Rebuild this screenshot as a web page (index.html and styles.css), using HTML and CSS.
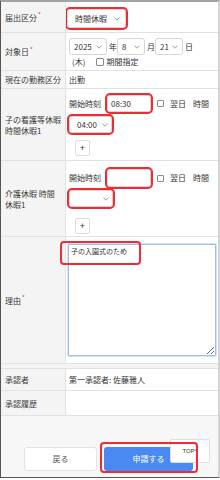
FILE: index.html
```html
<!DOCTYPE html>
<html lang="ja">
<head>
<meta charset="utf-8">
<title>申請</title>
<link rel="stylesheet" href="styles.css">
</head>
<body>
<div class="frame">
  <div class="row r1">
    <div class="label">届出区分<span class="req">*</span></div>
    <div class="value top">
      <div class="select sel-type hl">時間休暇<svg class="chev" viewBox="0 0 6 4"><path d="M0.5 0.5L3 3.2L5.5 0.5"/></svg></div>
    </div>
  </div>
  <div class="row r2">
    <div class="label">対象日<span class="req">*</span></div>
    <div class="value col">
      <div class="line">
        <div class="select w38">2025<svg class="chev" viewBox="0 0 6 4"><path d="M0.5 0.5L3 3.2L5.5 0.5"/></svg></div><span class="unit">年</span>
        <div class="select w28">8<svg class="chev" viewBox="0 0 6 4"><path d="M0.5 0.5L3 3.2L5.5 0.5"/></svg></div><span class="unit">月</span>
        <div class="select w28">21<svg class="chev" viewBox="0 0 6 4"><path d="M0.5 0.5L3 3.2L5.5 0.5"/></svg></div><span class="unit">日</span>
      </div>
      <div class="line l2"><span class="dow">(木)</span><span class="check cb-period"></span><span class="txt">期間指定</span></div>
    </div>
  </div>
  <div class="row r3">
    <div class="label">現在の勤務区分</div>
    <div class="value">出勤</div>
  </div>
  <div class="row r4">
    <div class="label">子の看護等休暇<br>時間休暇1</div>
    <div class="value col tcol t4">
      <div class="tline">
        <span class="tl">開始時刻</span>
        <div class="input hl">08:30</div>
        <span class="check"></span><span class="tl ml6">翌日</span><span class="tl ml7">時間</span>
      </div>
      <div class="select tsel hl s4">04:00<svg class="chev" viewBox="0 0 6 4"><path d="M0.5 0.5L3 3.2L5.5 0.5"/></svg></div>
      <div class="plus p4">+</div>
    </div>
  </div>
  <div class="row r5">
    <div class="label">介護休暇 時間<br>休暇1</div>
    <div class="value col tcol t5">
      <div class="tline">
        <span class="tl">開始時刻</span>
        <div class="input hl i5"></div>
        <span class="check"></span><span class="tl ml6">翌日</span><span class="tl ml7">時間</span>
      </div>
      <div class="select tsel hl s5"><span></span><svg class="chev" viewBox="0 0 6 4"><path d="M0.5 0.5L3 3.2L5.5 0.5"/></svg></div>
      <div class="plus p5">+</div>
    </div>
  </div>
  <div class="row r6">
    <div class="label">理由<span class="req">*</span></div>
    <div class="value top v6">
      <textarea class="reason">子の入園式のため</textarea>
    </div>
    <span class="mark mark-reason"></span>
  </div>
  <div class="sep"></div>
  <div class="row r7">
    <div class="label">承認者</div>
    <div class="value">第一承認者: 佐藤雅人</div>
  </div>
  <div class="row r8">
    <div class="label">承認履歴</div>
    <div class="value"></div>
  </div>
  <div class="footer">
    <button class="btn back">戻る</button>
    <button class="btn submit">申請する</button>
    <div class="totop">TOP^</div>
    <span class="mark mark-submit"></span>
  </div>
</div>
</body>
</html>
```

FILE: styles.css
```css
* { box-sizing: border-box; margin: 0; padding: 0; }
html, body { width: 220px; height: 480px; background: #fff; overflow: hidden; }
body {
  font-family: "Noto Sans CJK JP", "Noto Sans", sans-serif;
  font-size: 8px;
  line-height: 10px;
  color: #333;
}
.frame {
  width: 220px;
  height: 478px;
  border-top: 2px solid #a3a3a3;
  border-left: 1px solid #555;
  border-right: 2px solid #d4d4d4;
  border-bottom: 1px solid #555;
  display: flex;
  flex-direction: column;
  overflow: hidden;
  background: #f7f7f7;
}
.row {
  display: grid;
  grid-template-columns: 65px minmax(0, 1fr);
  border-bottom: 1px solid #e2e2e2;
  background: #fff;
  flex: none;
  position: relative;
}
.r1 { height: 31px; }
.r2 { height: 38px; }
.r3 { height: 18px; }
.r4 { height: 72px; }
.r5 { height: 76px; }
.r6 { height: 127px; }
.r7 { height: 22px; }
.r8 { height: 25px; }
.sep { height: 5px; background: #f4f4f4; border-bottom: 1px solid #e2e2e2; flex: none; }

.label {
  background: #f4f4f4;
  border-right: 1px solid #e2e2e2;
  padding-left: 4px;
  display: flex;
  align-items: center;
  line-height: 11px;
  color: #3a3a3a;
}
.req { color: #e53935; font-size: 6px; line-height: 6px; align-self: center; margin-top: -4px; margin-left: 1px; }
.value {
  padding-left: 3px;
  display: flex;
  align-items: center;
  overflow: hidden;
  white-space: nowrap;
}
.value.top { align-items: flex-start; padding-top: 7px; }
.value.col { flex-direction: column; align-items: flex-start; justify-content: flex-start; }

.hl { outline: 2px solid #ef2b34; outline-offset: 0; }
.mark { position: absolute; border: 2px solid #ef2b34; border-radius: 4px; pointer-events: none; }

.select {
  display: flex;
  align-items: center;
  justify-content: space-between;
  height: 17px;
  border: 1px solid #d6d6d6;
  border-radius: 3px;
  background: #fff;
  padding: 0 4px 0 4px;
  flex: none;
}
.chev { width: 6px; height: 4px; fill: none; stroke: #8a8a8a; stroke-width: 0.8; flex: none; }
.sel-type { width: 59px; height: 19px; margin-left: -2px; padding-left: 7px; padding-right: 5px; border-radius: 3px; }

.r2 .value { padding-top: 5px; }
.line { display: flex; align-items: center; }
.w38 { width: 38px; }
.w28 { width: 28px; padding-left: 4px; }
.unit { margin-left: 2px; }
.l2 { margin-top: 2px; height: 10px; }
.dow { margin-left: 3px; }
.check {
  display: inline-block;
  width: 7px;
  height: 7px;
  border: 1px solid #8c8c8c;
  border-radius: 1px;
  background: #fff;
  margin-left: 6px;
  flex: none;
}
.cb-period { width: 8px; height: 8px; margin-left: 11px; }
.txt { margin-left: 2px; }

.t4 { padding-top: 6px; }
.t5 { padding-top: 8px; }
.tline { display: flex; align-items: center; height: 17px; }
.t5 .tline { height: 18px; }
.input {
  width: 44px;
  height: 17px;
  margin-left: 6px;
  border: 1px solid #d6d6d6;
  border-radius: 3px;
  background: #fff;
  padding-left: 3px;
  display: flex;
  align-items: center;
  flex: none;
}
.i5 { height: 18px; }
.ml6 { margin-left: 6px; }
.ml7 { margin-left: 7px; }
.tsel { width: 43px; padding-left: 7px; padding-right: 3px; }
.s4 { margin-top: 4px; }
.s5 { margin-top: 3px; width: 44px; }
.plus {
  width: 15px;
  height: 16px;
  margin-left: 6px;
  border: 1px solid #dcdcdc;
  border-radius: 2px;
  background: #fff;
  display: flex;
  align-items: center;
  justify-content: center;
  font-family: "Liberation Sans", sans-serif;
  font-size: 9px;
  color: #333;
}
.p4 { margin-top: 7px; }
.p5 { margin-top: 11px; }

.reason {
  width: 148px;
  height: 112px;
  margin-left: -1px;
  border: 1px solid #9dbcf0;
  box-shadow: 0 0 0 1px #d6e4fb;
  border-radius: 1px;
  padding: 1px 2px;
  font-family: "Noto Sans CJK JP", sans-serif;
  font-size: 7px;
  line-height: 10px;
  color: #333;
  outline: none;
  background: #fff;
}
.mark-reason { left: 59px; top: 4px; width: 81px; height: 24px; }

.footer {
  flex: 1;
  position: relative;
  display: flex;
  align-items: flex-start;
  gap: 7px;
  padding: 31px 0 0 23px;
  background: #f7f7f7;
}
.btn {
  height: 24px;
  border-radius: 3px;
  font-family: "Noto Sans CJK JP", sans-serif;
  font-size: 8px;
  line-height: 10px;
  flex: none;
}
.back { width: 73px; background: #fff; border: 1px solid #e3e3e3; color: #555; }
.submit { width: 89px; background: #4a88f2; border: none; color: #fff; }
.totop {
  position: absolute;
  left: 169px;
  top: 23px;
  width: 40px;
  height: 24px;
  background: #fff;
  border: 1px solid #dedede;
  border-radius: 2px;
  display: flex;
  align-items: center;
  justify-content: center;
  font-family: "Liberation Sans", sans-serif;
  font-size: 6px;
  color: #333;
  z-index: 1;
}
.mark-submit { left: 99px; top: 26px; width: 98px; height: 31px; z-index: 2; }
```
